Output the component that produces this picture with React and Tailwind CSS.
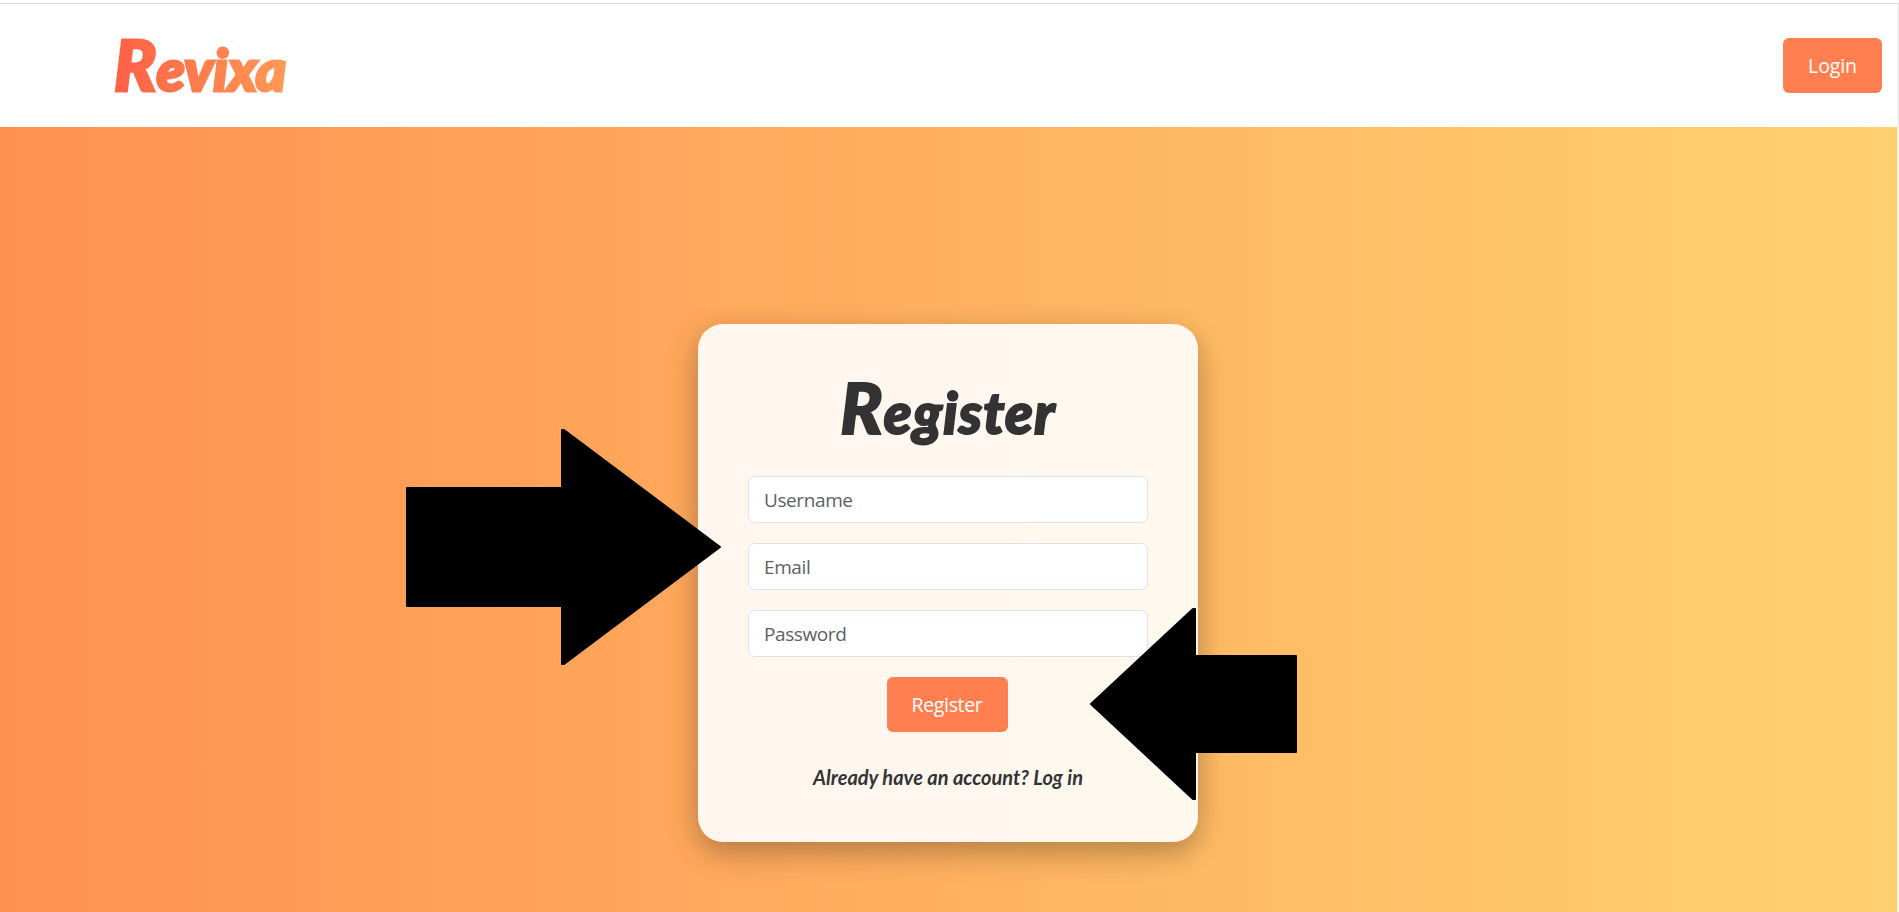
import React from "react";

const fields = [
  { label: "Username", type: "text" },
  { label: "Email", type: "email" },
  { label: "Password", type: "password" },
];

const buttonClass =
  "h-[55px] shrink-0 rounded-[6px] bg-[#ff7f50] font-['Open_Sans',sans-serif] text-[19.5px] text-white";

function Header() {
  return (
    <header className="flex h-[123px] items-start justify-between bg-white pr-[15px] pl-[111px]">
      <div className="mt-[20px] bg-gradient-to-r from-[#ff6347] from-10% to-[#ff9a56] bg-clip-text pr-1 pl-[3px] font-['Lato',sans-serif] text-[58px] leading-[80px] font-black tracking-[0.1px] whitespace-nowrap text-transparent italic [-webkit-text-stroke:3px_transparent] first-letter:text-[70px]">
        Revixa
      </div>
      <button className={buttonClass + " mt-[34px] w-[99px] tracking-[-0.1px]"}>Login</button>
    </header>
  );
}

function RegisterCard() {
  return (
    <section className="mt-[197px] ml-[698px] flex h-[518px] w-[500px] flex-col items-center rounded-[25px] bg-white/90 px-[50px] shadow-[0_10px_30px_rgba(0,0,0,0.3)]">
      <h1 className="mt-[38px] h-[114px] font-['Lato',sans-serif] text-[57px] leading-[90px] font-black tracking-[1.2px] whitespace-nowrap text-[#333] italic [-webkit-text-stroke:2px_#333] [stroke-linejoin:round] first-letter:text-[70px]">
        Register
      </h1>
      <form className="flex w-full flex-col items-center gap-[20px]">
        {fields.map((field) => (
          <input
            key={field.label}
            type={field.type}
            placeholder={field.label}
            className="h-[47px] w-full rounded-[7px] border border-[#dee2e6] bg-white px-[15px] font-['Open_Sans',sans-serif] text-[19px] tracking-[-0.4px] placeholder:text-[#5c6166]"
          />
        ))}
        <button type="button" className={buttonClass + " mr-[2px] w-[121px] tracking-[-0.35px]"}>
          Register
        </button>
      </form>
      <a className="mt-[30px] font-['Lato',sans-serif] text-[20px] leading-[30px] font-bold whitespace-nowrap text-[#333] italic">
        Already have an account? Log in
      </a>
    </section>
  );
}

export default function App() {
  return (
    <div className="relative flex h-[912px] w-[1899px] flex-col overflow-hidden bg-white">
      <div className="h-[4px] shrink-0 border-b border-[#dedede]" />
      <div className="flex min-h-0 flex-1">
        <div className="flex w-[1897px] shrink-0 flex-col">
          <Header />
          <main className="flex flex-1 flex-col bg-gradient-to-r from-[#ff9052] via-[#ffb15f] to-[#ffd26f]">
            <RegisterCard />
          </main>
        </div>
        <div className="flex-1 bg-[#f1f1f1]" />
      </div>
      <svg className="absolute top-[428px] left-[405px]" width="318" height="239" viewBox="405 428 318 239">
        <path d="M407 488H562V430H564L720 547L564 664H562V606H407Z" stroke="#000" strokeWidth="2" strokeLinejoin="round" />
      </svg>
      <svg className="absolute top-[607px] left-[1089px]" width="210" height="195" viewBox="1089 607 210 195">
        <path d="M1296 656V752H1195V799H1193L1091 704L1193 609H1195V656Z" stroke="#000" strokeWidth="2" strokeLinejoin="round" />
      </svg>
    </div>
  );
}
